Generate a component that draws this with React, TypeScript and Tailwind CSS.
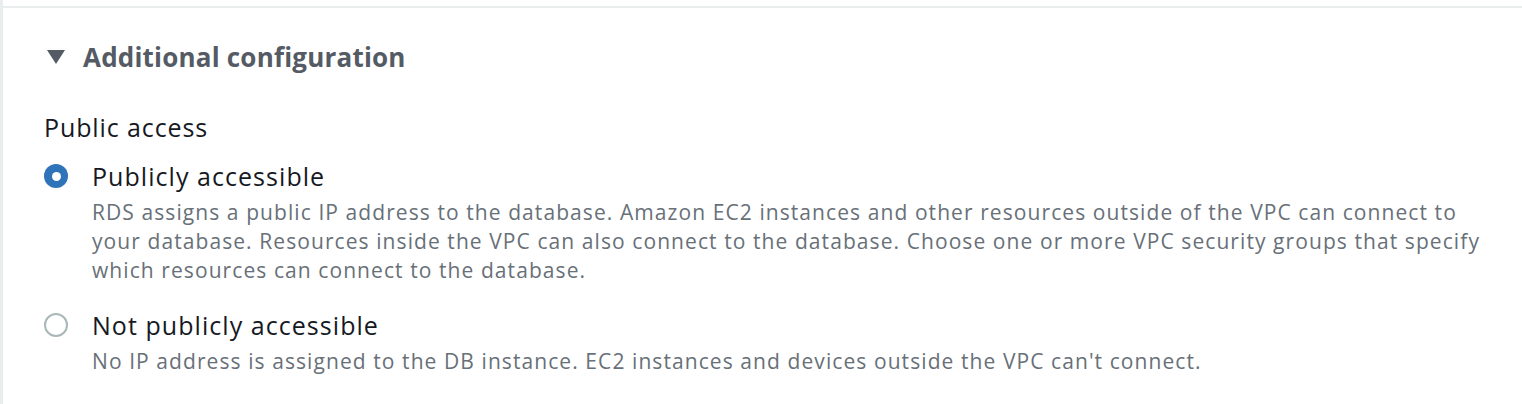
export default function App() {
  const font = { fontFamily: '"Open Sans", "Noto Sans", Arial, sans-serif' };
  return (
    <div className="w-[1522px] h-[404px] bg-white overflow-hidden" style={font}>
      <div className="h-full border-l-[3px] border-[#eaeded] pt-[6px]">
        <div className="h-[2px] bg-[#eaeded]" />
        <div className="pl-[41px] pt-[33px]">
          <div className="flex items-center gap-[17px] h-[32px]">
            <svg width="20" height="16" viewBox="0 0 20 16" className="ml-[2px]">
              <polygon points="1,1 19,1 10,15" fill="#545b64" />
            </svg>
            <span className="text-[26px] font-bold text-[#545b64] tracking-[0.2px]">Additional configuration</span>
          </div>
          <div className="mt-[39px] text-[25px] leading-[30px] text-[#16191f] tracking-[0.9px]">Public access</div>
          <div className="mt-[17px] flex flex-col gap-[23px]">
            <Radio
              checked
              label="Publicly accessible"
              desc="RDS assigns a public IP address to the database. Amazon EC2 instances and other resources outside of the VPC can connect to your database. Resources inside the VPC can also connect to the database. Choose one or more VPC security groups that specify which resources can connect to the database."
            />
            <Radio
              label="Not publicly accessible"
              desc="No IP address is assigned to the DB instance. EC2 instances and devices outside the VPC can't connect."
            />
          </div>
        </div>
      </div>
    </div>
  );
}

function Radio({ checked, label, desc }: { checked?: boolean; label: string; desc: string }) {
  return (
    <div className="flex gap-[24px]">
      <div className="pt-[5px] shrink-0">
        {checked ? (
          <div className="w-[24px] h-[24px] rounded-full bg-[#2f73b8] flex items-center justify-center">
            <div className="w-[9px] h-[9px] rounded-full bg-white" />
          </div>
        ) : (
          <div className="w-[24px] h-[24px] rounded-full border-2 border-[#aab7b8]" />
        )}
      </div>
      <div className="max-w-[1400px]">
        <div className="text-[25px] leading-[34px] text-[#16191f] tracking-[1.05px]">{label}</div>
        <div className="mt-[5px] text-[21px] leading-[29px] text-[#687078] tracking-[1.08px]">{desc}</div>
      </div>
    </div>
  );
}
